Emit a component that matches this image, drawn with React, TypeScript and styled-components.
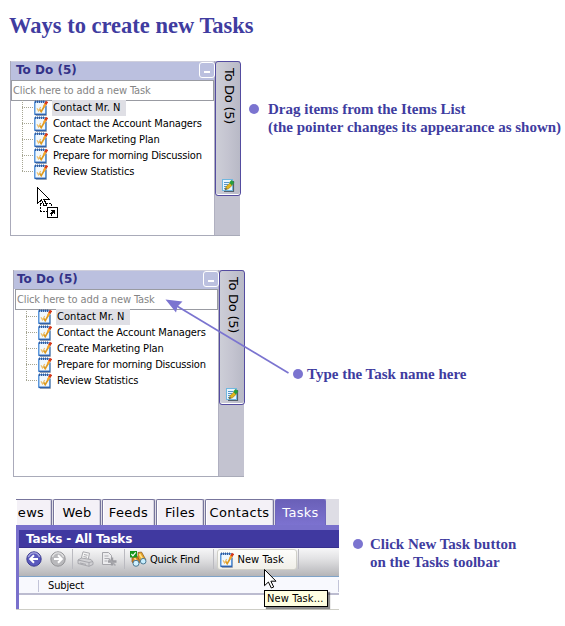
import React from "react";
import styled, { createGlobalStyle, css } from "styled-components";

const Global = createGlobalStyle`
  *, *::before, *::after { box-sizing: border-box; }
  body { margin: 0; background: #fff; }
`;

const uiFont = css`
  font-family: "DejaVu Sans Condensed", "DejaVu Sans", sans-serif;
  font-stretch: condensed;
  font-size: 11px;
  white-space: nowrap;
`;
const wideFont = css`
  font-family: "DejaVu Sans", sans-serif;
  white-space: nowrap;
`;

const Page = styled.main`
  position: relative;
  width: 565px;
  height: 626px;
  overflow: hidden;
  background: #fff;
`;
const Title = styled.h1`
  margin: 0;
  height: 61px;
  padding: 12px 0 0 9px;
  font: bold 22.5px/28px "Liberation Serif", serif;
  color: #403ca0;
  white-space: nowrap;
`;
const Example = styled.section<{ $left: number; $height: number; $gap: number }>`
  display: flex;
  align-items: flex-start;
  padding-left: ${(p) => p.$left}px;
  height: ${(p) => p.$height}px;
  margin-bottom: ${(p) => p.$gap}px;
`;

const Callout = styled.div<{ $top: number; $left: number; $gap: number }>`
  display: flex;
  gap: ${(p) => p.$gap}px;
  margin: ${(p) => p.$top}px 0 0 ${(p) => p.$left}px;
  font: bold 15px/18px "Liberation Serif", serif;
  color: #403ca0;
  white-space: nowrap;
`;
const Bullet = styled.span`
  flex: none;
  width: 10px;
  height: 10px;
  margin-top: 4px;
  border-radius: 50%;
  background: #7b74d0;
`;

const Panel = styled.div<{ $width: number; $height: number }>`
  display: flex;
  width: ${(p) => p.$width}px;
  height: ${(p) => p.$height}px;
  border-bottom: 1px solid #a9abb9;
`;
const ListSide = styled.div`
  flex: 1;
  min-width: 0;
  border-left: 1px solid #aaaaba;
  border-right: 1px solid #b0b0c0;
`;
const PanelHeader = styled.header<{ $indent: number }>`
  display: flex;
  justify-content: space-between;
  align-items: flex-start;
  height: 19px;
  padding-left: ${(p) => p.$indent}px;
  border-top: 1px solid #cfcfdc;
  background: #bbc0df;
  color: #333288;
  ${wideFont}
  font-size: 12px;
  font-weight: bold;
  line-height: 17px;
  letter-spacing: 0;
`;
const MinimizeBox = styled.span`
  display: flex;
  justify-content: center;
  width: 16px;
  height: 16px;
  margin: 0 -1px 0 0;
  border: 1px solid #fff;
  border-radius: 3px;
  &::after {
    content: "";
    width: 6px;
    height: 2px;
    margin-top: 8px;
    background: #fff;
  }
`;
const AddField = styled.div<{ $inset: number }>`
  height: 21px;
  margin-left: ${(p) => p.$inset}px;
  padding-left: 1px;
  border: 1px solid #999ba2;
  background: #fff;
  color: #858585;
  ${uiFont}
  line-height: 19px;
  letter-spacing: -0.12px;
`;
const TaskList = styled.ul<{ $indent: number }>`
  list-style: none;
  margin: -1px 0 0;
  padding: 0 0 0 ${(p) => p.$indent}px;
`;
const TaskRow = styled.li`
  display: flex;
  height: 16px;
`;
const Branch = styled.span<{ $last: boolean }>`
  width: 12px;
  height: ${(p) => (p.$last ? 8 : 16)}px;
  background:
    repeating-linear-gradient(to bottom, #a5a592 0 1px, transparent 1px 2px) 0 0 / 1px 100% no-repeat,
    repeating-linear-gradient(to right, #a5a592 0 1px, transparent 1px 2px) 0 7px / 100% 1px no-repeat;
`;
const TaskName = styled.span<{ $selected: boolean; $spacing: number }>`
  height: 16px;
  margin-left: 4px;
  padding: 0 5px 0 1px;
  background: ${(p) => (p.$selected ? "#dfdfe5" : "transparent")};
  color: #000;
  ${uiFont}
  line-height: 15px;
  letter-spacing: ${(p) => p.$spacing}px;
`;
const Strip = styled.aside`
  width: 25px;
  background: #c3c3d0;
`;
const SideTab = styled.div`
  display: flex;
  flex-direction: column;
  justify-content: space-between;
  align-items: center;
  width: 26px;
  height: 135px;
  padding: 6px 0 3px 1px;
  border: 1px solid #544ca0;
  border-radius: 3px;
  background: linear-gradient(to right, #cdced7, #c4c4d0 50%, #b8b9c6);
  box-shadow: inset 0 -1px #fff;
`;
const SideLabel = styled.span`
  writing-mode: vertical-rl;
  color: #000;
  ${wideFont}
  font-size: 13px;
  line-height: 20px;
  letter-spacing: -0.25px;
`;

const Overlay = styled.svg<{ $x: number; $y: number }>`
  position: absolute;
  left: ${(p) => p.$x}px;
  top: ${(p) => p.$y}px;
`;

const Browser = styled.div`
  width: 323px;
  height: 111px;
  display: flex;
  flex-direction: column;
  border-bottom: 1px solid #cecec6;
`;
const TabBar = styled.nav`
  display: flex;
  gap: 1px;
  height: 26px;
  overflow: hidden;
  background: #dedde5;
`;
const Tab = styled.span<{ $width: number; $active?: boolean; $first?: boolean }>`
  width: ${(p) => p.$width}px;
  height: 27px;
  border: 1px solid ${(p) => (p.$active ? "#7067bd" : "#77759c")};
  border-left-width: ${(p) => (p.$first ? 0 : 1)}px;
  border-bottom: 0;
  border-radius: ${(p) => (p.$first ? "0 2px 0 0" : "2px 2px 0 0")};
  background: ${(p) => (p.$active ? "linear-gradient(#6a60b8, #7d73d1)" : "#f4f1f7")};
  box-shadow: ${(p) => (p.$active ? "none" : "inset -1px 0 #d4d2de, inset 1px 0 #fff")};
  color: ${(p) => (p.$active ? "#fff" : "#000")};
  ${wideFont}
  font-size: 13px;
  line-height: 26px;
  letter-spacing: 0.3px;
  text-align: center;
  ${(p) =>
    p.$first &&
    css`
      padding-right: 5px;
    `}
`;
const Frame = styled.div`
  flex: 1;
  display: flex;
  flex-direction: column;
  border: solid #7970cc;
  border-width: 5px 0 0 3px;
`;
const ViewTitle = styled.div`
  height: 18px;
  padding-left: 7px;
  background: #4039a0;
  border-bottom: 1px solid #37308d;
  color: #fff;
  ${wideFont}
  font-size: 12px;
  font-weight: bold;
  line-height: 18px;
  letter-spacing: -0.17px;
`;
const Toolbar = styled.div`
  display: flex;
  align-items: flex-start;
  height: 28px;
  padding: 1px 0 0 7px;
  background: linear-gradient(#f7f7f8, #e1e1e3 40%, #b5b5b8);
  color: #000;
  ${uiFont}
`;
const Tool = styled.span<{ $ml: number }>`
  display: flex;
  align-items: center;
  height: 20px;
  margin-left: ${(p) => p.$ml}px;
`;
const ToolLabel = styled.span`
  margin: 0 0 0 3px;
  letter-spacing: -0.18px;
`;
const Separator = styled.i<{ $ml: number }>`
  width: 1px;
  height: 20px;
  margin-left: ${(p) => p.$ml}px;
  background: #babac0;
`;
const HotTool = styled(Tool)`
  width: 80px;
  height: 21px;
  padding-left: 2px;
  border: 1px solid #d0d0c8;
  border-radius: 3px;
  background: linear-gradient(#fdfdfb, #f0efe8);
  ${ToolLabel} {
    margin: -1px 0 0 4px;
    letter-spacing: 0.05px;
  }
`;
const ColumnHeader = styled.div`
  display: flex;
  align-items: center;
  height: 19px;
  border-top: 1px solid #7fa3c8;
  border-bottom: 2px solid #bcbcd0;
  background: #f8f9fe;
  color: #000;
  ${uiFont}
`;
const Column = styled.span`
  flex: 1;
  margin: 1px 0 0 19px;
  padding-left: 9px;
  border: solid #c2c4d8;
  border-width: 0 1px;
  line-height: 12px;
  letter-spacing: -0.15px;
`;
const Tooltip = styled.div`
  position: absolute;
  left: 264px;
  top: 590px;
  width: 64px;
  height: 17px;
  padding-left: 2px;
  border: 1px solid #000;
  background: #ffffe1;
  color: #000;
  box-shadow: 2px 2px 1px rgba(0, 0, 0, 0.45);
  ${uiFont}
  line-height: 16px;
  letter-spacing: 0.1px;
`;

const TaskIcon = () => (
  <svg width="14" height="16" viewBox="0 0 14 16">
    <path d="M2 15.500h10.500V6" fill="none" stroke="#a3a5ab" />
    <rect x="0.750" y="1.750" width="11" height="12.750" rx="0.500" fill="#f0f8fe" stroke="#5b97dc" strokeWidth="1.500" />
    <path d="M1 14.300h11" stroke="#2a5ca6" strokeWidth="1.200" />
    <path d="M1.500 .5v2.500M3.500 .5v2.500M5.500 .5v2.500M7.500 .5v2.500M9.500 .5v2.500" stroke="#355a98" strokeWidth="1" />
    <path d="M3 8.200l1.500 2.800L6.700 7" fill="none" stroke="#efc06a" strokeWidth="1.200" />
    <path d="M5.800 9.500l1.400 2.200L10.500 6" fill="none" stroke="#dd9a20" strokeWidth="1.600" />
    <path d="M9.800 7l2-3.600" stroke="#f6a52c" strokeWidth="2.400" />
    <path d="M11.400 4.200L13 1.500" stroke="#d63a1c" strokeWidth="2.600" />
  </svg>
);
const NoteIcon = () => (
  <svg width="13" height="14" viewBox="0 0 13 14">
    <path d="M2 13.400h9.400V3" fill="none" stroke="#53606b" strokeWidth="1.400" />
    <rect x="0.500" y="1.500" width="10" height="11" fill="#e9f6ff" stroke="#70b7df" />
    <path d="M2 4.500h5M2 6.500h4M2 8.500h3M2 10.500h2" stroke="#5796c9" />
    <path d="M3 12l1.200-3.500L8 5l2.500 2-4 3.700z" fill="#e2b51b" stroke="#937512" strokeWidth="0.600" />
    <path d="M7.200 4.500L9.500 2l2.800 2.500-2.500 3z" fill="#289d3b" />
    <path d="M3 12l1-2 1 1z" fill="#184d9b" />
  </svg>
);
const RoundArrow = ({ back }: { back?: boolean }) => (
  <svg width="16" height="16" viewBox="0 0 16 16">
    <circle cx="8" cy="8" r="7.200" fill={back ? "#5a59bd" : "#b9b9bc"} stroke={back ? "#32328a" : "#8d8d91"} strokeWidth="0.900" />
    <path d="M2.400 6Q4 1.800 8 1.800T13.600 6" fill="none" stroke={back ? "#aaa9df" : "#e1e1e2"} strokeWidth="1.300" />
    <path
      d={back ? "M12 8H4.500M8 4.200L4.200 8 8 11.800" : "M4 8h7.500M8 4.200L11.800 8 8 11.800"}
      fill="none"
      stroke="#fff"
      strokeWidth="2"
    />
  </svg>
);
const PrinterIcon = () => (
  <svg width="17" height="16" viewBox="0 0 17 16" stroke="#a2a2a7" strokeWidth="0.900">
    <path d="M4 8.500L6 .8l6.500 1.400L11 9.500z" fill="#f4f4f4" />
    <path d="M1 9l3.500-2L14 8.500l2 2.500v2.500l-4 1.800L1 12.500z" fill="#d2d2d5" />
    <path d="M1 9l11 2.500 4-1M12 11.500v3.800M3 12l6 1.400M7 3.500l3.500.8M6.500 5.500l3.500.8" fill="none" />
  </svg>
);
const ExportIcon = () => (
  <svg width="16" height="16" viewBox="0 0 16 16">
    <path d="M1.500 1.500h6l3 3v9h-9z" fill="#ececee" stroke="#a5a5aa" />
    <path d="M3.500 5h4M3.500 7.500h5M3.500 10h3" stroke="#adadb2" />
    <path d="M11 6.500v8M7 10.500h8.500" stroke="#9d9da2" strokeWidth="2.400" />
    <path d="M8 8l6.500 6.500" stroke="#a7a7ac" strokeWidth="1.500" />
  </svg>
);
const BinocularsIcon = () => (
  <svg width="17" height="16" viewBox="0 0 17 16">
    <path d="M8 1.500l3.500-.5L16 9l-4 3-4-5z" fill="#e8a62b" stroke="#85551d" strokeWidth="0.700" />
    <path d="M2 6.500L7 5l3 6-4 3-4-3z" fill="#d88520" stroke="#85551d" strokeWidth="0.700" />
    <path d="M9.500 3l3 5M4.500 7l2 3" stroke="#ffe28a" strokeWidth="1.600" />
    <circle cx="13.200" cy="10.200" r="2.800" fill="#c6eeff" stroke="#4b7892" />
    <circle cx="6" cy="12.300" r="3" fill="#d0f1ff" stroke="#4b7892" />
    <rect width="7" height="6.500" fill="#16951b" />
    <path d="M1.400 3l1.500 1.800L5.700 1.300" fill="none" stroke="#fff" strokeWidth="1.200" />
  </svg>
);

const arrowPointer = "M.5.5v16.200L4.400 13l2.900 6 2.400-1-2.800-5.800H12z";
const tasks = [
  { name: "Contact Mr. N", spacing: 0.05 },
  { name: "Contact the Account Managers", spacing: -0.14 },
  { name: "Create Marketing Plan", spacing: -0.14 },
  { name: "Prepare for morning Discussion", spacing: -0.2 },
  { name: "Review Statistics", spacing: -0.14 },
];

const ToDoPanel = ({ width, height, inset }: { width: number; height: number; inset: number }) => (
  <Panel $width={width} $height={height}>
    <ListSide>
      <PanelHeader $indent={inset ? 3 : 5}>
        To Do (5)
        <MinimizeBox />
      </PanelHeader>
      <AddField $inset={inset}>Click here to add a new Task</AddField>
      <TaskList $indent={11 + inset}>
        {tasks.map((t, i) => (
          <TaskRow key={t.name}>
            <Branch $last={i === tasks.length - 1} />
            <TaskIcon />
            <TaskName $selected={i === 0} $spacing={t.spacing}>{t.name}</TaskName>
          </TaskRow>
        ))}
      </TaskList>
    </ListSide>
    <Strip>
      <SideTab>
        <SideLabel>To Do (5)</SideLabel>
        <NoteIcon />
      </SideTab>
    </Strip>
  </Panel>
);

export default function App() {
  return (
    <Page>
      <Global />
      <Title>Ways to create new Tasks</Title>

      <Example $left={10} $height={175} $gap={34}>
        <ToDoPanel width={230} height={175} inset={0} />
        <Callout $top={39} $left={9} $gap={9}>
          <Bullet />
          <div>Drag items from the Items List<br />(the pointer changes its appearance as shown)</div>
        </Callout>
      </Example>

      <Example $left={13} $height={207} $gap={22}>
        <ToDoPanel width={231} height={207} inset={1} />
        <Callout $top={95} $left={49} $gap={4}>
          <Bullet />
          <div>Type the Task name here</div>
        </Callout>
      </Example>

      <Example $left={16} $height={111} $gap={0}>
        <Browser>
          <TabBar>
            <Tab $width={36} $first>ews</Tab>
            <Tab $width={48}>Web</Tab>
            <Tab $width={53}>Feeds</Tab>
            <Tab $width={48}>Files</Tab>
            <Tab $width={69}>Contacts</Tab>
            <Tab $width={51} $active>Tasks</Tab>
          </TabBar>
          <Frame>
            <ViewTitle>Tasks - All Tasks</ViewTitle>
            <Toolbar>
              <Tool $ml={0}><RoundArrow back /></Tool>
              <Tool $ml={8}><RoundArrow /></Tool>
              <Separator $ml={6} />
              <Tool $ml={4}><PrinterIcon /></Tool>
              <Tool $ml={7}><ExportIcon /></Tool>
              <Separator $ml={7} />
              <Tool $ml={5}><BinocularsIcon /><ToolLabel>Quick Find</ToolLabel></Tool>
              <Separator $ml={13} />
              <HotTool $ml={3}><TaskIcon /><ToolLabel>New Task</ToolLabel></HotTool>
              <Separator $ml={1} />
            </Toolbar>
            <ColumnHeader><Column>Subject</Column></ColumnHeader>
          </Frame>
        </Browser>
        <Callout $top={36} $left={14} $gap={7}>
          <Bullet />
          <div>Click New Task button<br />on the Tasks toolbar</div>
        </Callout>
      </Example>

      <Overlay $x={37} $y={187} width="22" height="32" viewBox="0 0 22 32" shapeRendering="crispEdges">
        <path d="M3 16.500h12M3 24.500h12" stroke="#000" strokeDasharray="2 1" />
        <path d="M3.500 17v8M14.500 17v8" stroke="#000" strokeDasharray="2 1" />
        <path d={arrowPointer} fill="#fff" stroke="#000" />
        <rect x="10.500" y="20.500" width="10" height="10" fill="#fff" stroke="#000" />
        <path d="M13 23h5v5l-1.700-1.700c-1.500.8-1.800 1.600-1.600 2.900-2-2-1.500-3.500 0-4.500z" fill="#000" />
      </Overlay>
      <Overlay $x={165} $y={297} width="125" height="78" viewBox="0 0 125 78">
        <path d="M11 8.500L123.500 76" stroke="#7b74d0" strokeWidth="1.700" />
        <path d="M.5 2.500L17.500 4.500 12.500 9.500 11 15.500z" fill="#7b74d0" />
      </Overlay>
      <Tooltip>New Task...</Tooltip>
      <Overlay $x={264} $y={569} width="14" height="21" viewBox="0 0 14 21">
        <path d={arrowPointer} fill="#fff" stroke="#000" />
      </Overlay>
    </Page>
  );
}
